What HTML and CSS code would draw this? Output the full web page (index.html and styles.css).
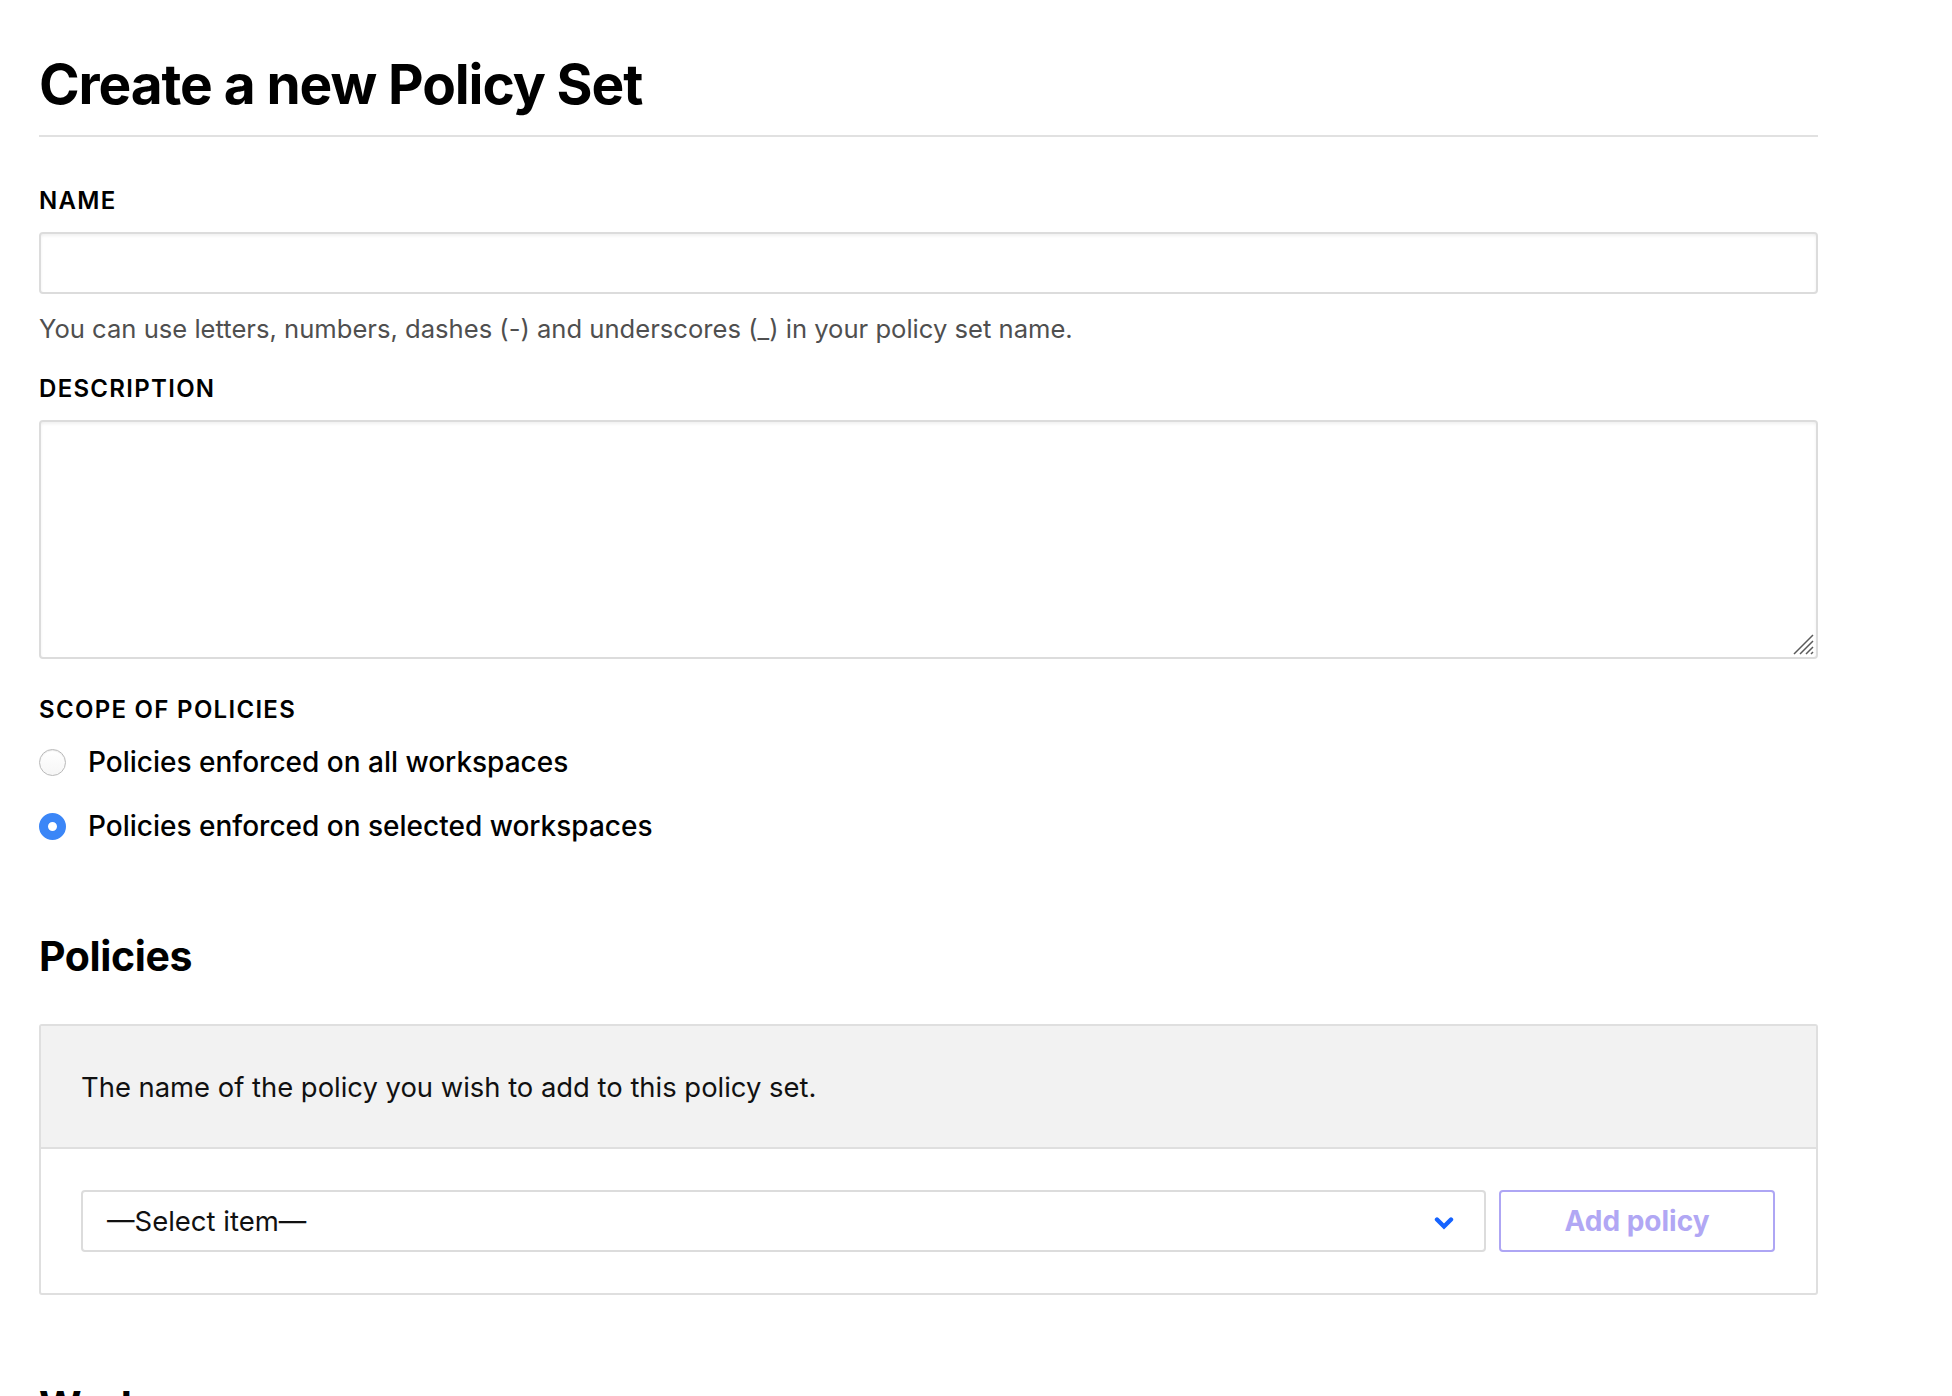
FILE: index.html
```html
<!DOCTYPE html>
<html lang="en">
<head>
<meta charset="utf-8">
<title>Create a new Policy Set</title>
<link rel="stylesheet" href="styles.css">
</head>
<body>
<main class="page">
  <h1 class="page-title">Create a new Policy Set</h1>

  <div class="field field-name">
    <label class="field-label" for="name">NAME</label>
    <input class="text-input" id="name" type="text">
    <p class="help">You can use letters, numbers, dashes (-) and underscores (_) in your policy set name.</p>
  </div>

  <div class="field field-desc">
    <label class="field-label" for="desc">DESCRIPTION</label>
    <div class="textarea-wrap">
      <textarea class="text-area" id="desc"></textarea>
      <svg class="grip" width="24" height="24" viewBox="0 0 24 24" aria-hidden="true">
        <path d="M22 3 L3 22 M22 9 L9 22 M22 15 L15 22 M22 20 L20 22" stroke="#5a5a5a" stroke-width="1.5" fill="none"/>
      </svg>
    </div>
  </div>

  <div class="field field-scope">
    <div class="field-label">SCOPE OF POLICIES</div>
    <label class="radio-row">
      <span class="radio"></span>
      <span class="radio-text">Policies enforced on all workspaces</span>
    </label>
    <label class="radio-row">
      <span class="radio radio-on"></span>
      <span class="radio-text">Policies enforced on selected workspaces</span>
    </label>
  </div>

  <h2 class="section-title">Policies</h2>

  <section class="panel">
    <div class="panel-head">The name of the policy you wish to add to this policy set.</div>
    <div class="panel-body">
      <div class="select">
        <span class="select-text">—Select item—</span>
        <svg class="chevron" width="20" height="14" viewBox="0 0 20 14" aria-hidden="true">
          <path d="M3 3.5 L10 10.5 L17 3.5" stroke="#1563ff" stroke-width="4.4" stroke-linecap="round" stroke-linejoin="miter" fill="none"/>
        </svg>
      </div>
      <button class="btn-add" type="button">Add policy</button>
    </div>
  </section>

  <h2 class="section-title section-next">Workspaces</h2>
</main>
</body>
</html>
```

FILE: styles.css
```css
html, body {
  margin: 0;
  padding: 0;
  background: #fff;
}

body {
  font-family: Inter, "Liberation Sans", Arial, sans-serif;
  color: #000;
  overflow: hidden;
}

.page {
  width: 1779px;
  padding: 51px 0 0 39px;
}

.page-title {
  margin: 0;
  font-size: 55px;
  line-height: 67px;
  font-weight: 700;
  letter-spacing: -1.1px;
  padding-bottom: 17px;
  border-bottom: 2px solid #e1e1e1;
}

.field-label {
  display: block;
  font-size: 24px;
  line-height: 28px;
  font-weight: 600;
  letter-spacing: 1.3px;
  color: #000;
}

.field-name {
  margin-top: 50px;
}

.text-input {
  display: block;
  box-sizing: border-box;
  width: 100%;
  height: 62px;
  margin: 17px 0 0;
  border: 2px solid #dcdcdc;
  border-radius: 4px;
  box-shadow: inset 0 2px 3px rgba(0,0,0,0.06);
  background: #fff;
  font: inherit;
}

.help {
  margin: 20px 0 0;
  font-size: 25.6px;
  line-height: 30px;
  color: #4f4f4f;
}

.field-desc {
  margin-top: 31px;
}

.textarea-wrap {
  position: relative;
  margin-top: 17px;
}

.text-area {
  display: block;
  box-sizing: border-box;
  width: 100%;
  height: 239px;
  margin: 0;
  border: 2px solid #dcdcdc;
  border-radius: 4px;
  box-shadow: inset 0 2px 3px rgba(0,0,0,0.06);
  resize: none;
  font: inherit;
}

.grip {
  position: absolute;
  right: 3px;
  bottom: 3px;
}

.field-scope {
  margin-top: 37px;
}

.radio-row {
  display: flex;
  align-items: center;
  gap: 22px;
  height: 34px;
  margin-top: 21px;
}

.radio-row + .radio-row {
  margin-top: 30px;
}

.radio {
  box-sizing: border-box;
  width: 27px;
  height: 27px;
  border-radius: 50%;
  border: 1px solid #b9b9b9;
  background: linear-gradient(#fff, #f6f6f6);
  box-shadow: inset 0 1px 1px rgba(0,0,0,0.08);
  flex: none;
}

.radio-on {
  border: 9.5px solid #3b86f7;
  background: #fff;
  box-shadow: none;
}

.radio-text {
  font-size: 28px;
  font-weight: 500;
  letter-spacing: 0;
}

.section-title {
  margin: 0;
  font-size: 41px;
  line-height: 48px;
  font-weight: 700;
  letter-spacing: -0.4px;
}

.field-scope + .section-title {
  margin-top: 89px;
}

.panel {
  margin-top: 44px;
  border: 2px solid #dfdfdf;
  border-radius: 3px;
}

.panel-head {
  background: #f2f2f2;
  border-bottom: 2px solid #dfdfdf;
  height: 123px;
  box-sizing: border-box;
  padding: 0 40px;
  display: flex;
  align-items: center;
  font-size: 27.4px;
  color: #111;
}

.panel-body {
  display: flex;
  align-items: center;
  gap: 13px;
  padding: 41px 41px 41px 40px;
}

.select {
  flex: 1;
  height: 62px;
  box-sizing: border-box;
  border: 2px solid #dcdcdc;
  border-radius: 4px;
  display: flex;
  align-items: center;
  justify-content: space-between;
  padding: 0 30px 0 24px;
}

.select-text {
  font-size: 27.5px;
  color: #111;
}

.chevron {
  margin-top: 3px;
}

.btn-add {
  width: 276px;
  height: 62px;
  box-sizing: border-box;
  border: 2px solid #aea6f4;
  border-radius: 4px;
  background: #fff;
  color: #b1a7f4;
  font-family: inherit;
  font-size: 28px;
  font-weight: 700;
  padding: 0;
}

.section-next {
  margin-top: 87px;
}
```
